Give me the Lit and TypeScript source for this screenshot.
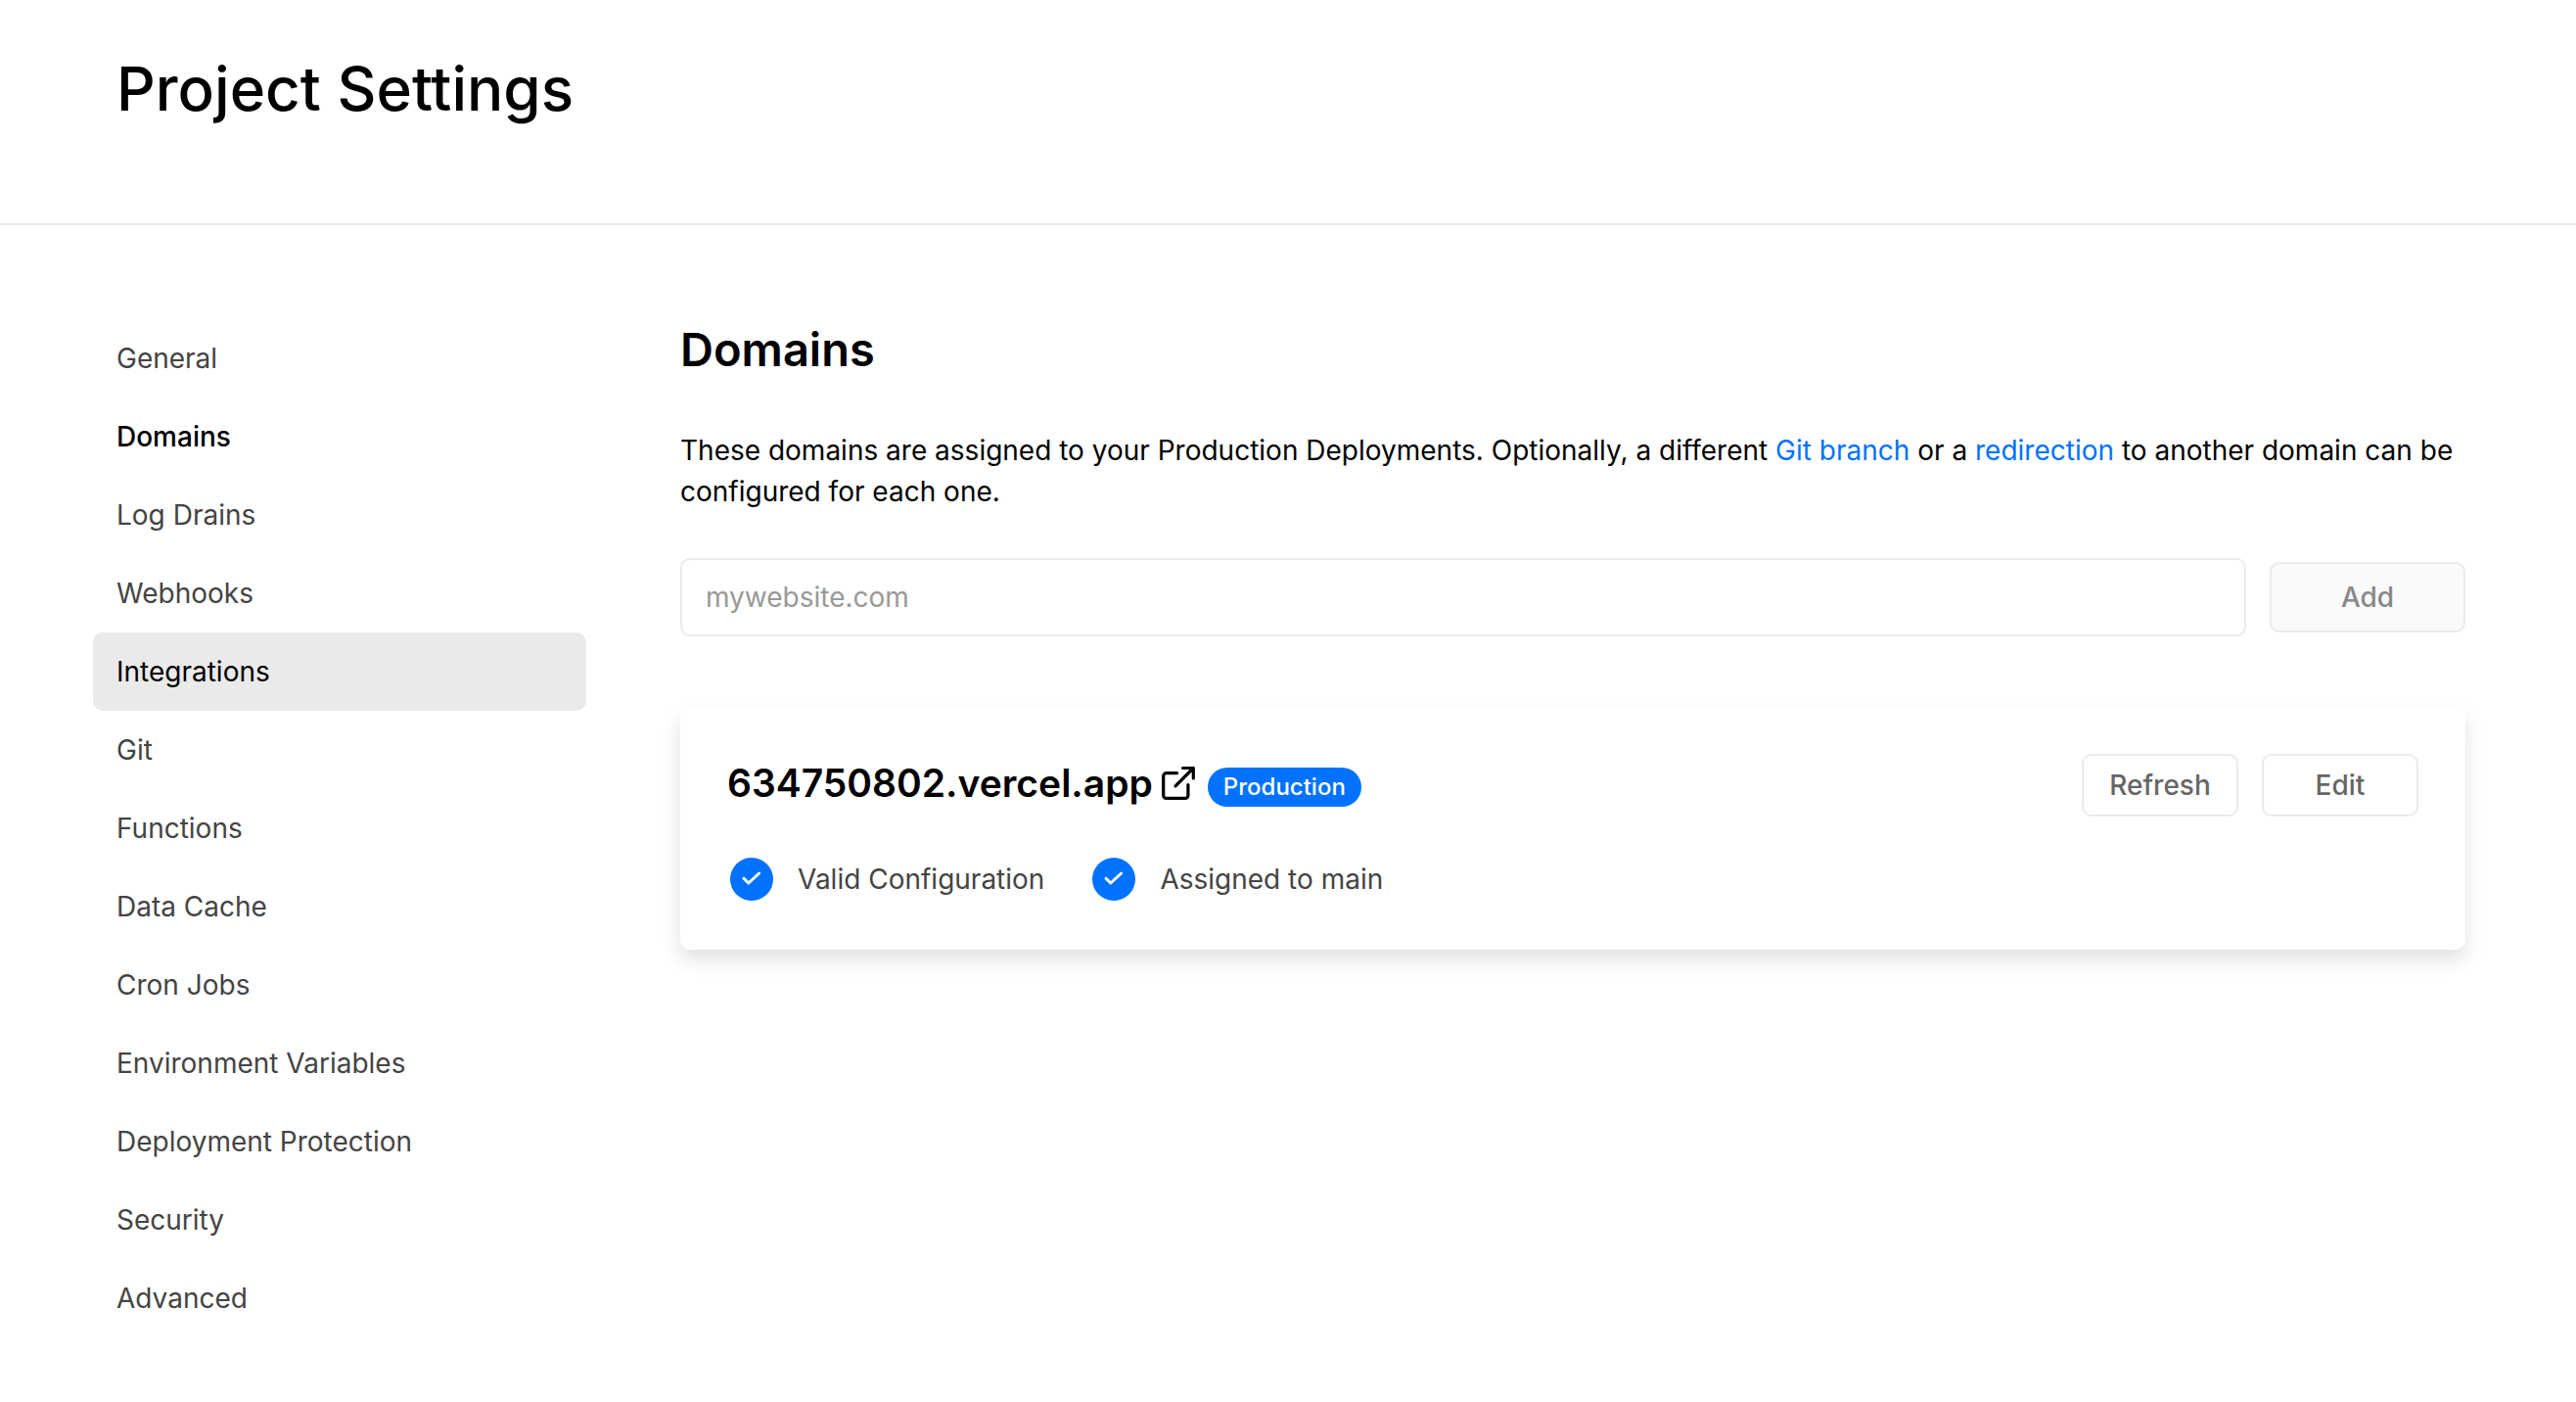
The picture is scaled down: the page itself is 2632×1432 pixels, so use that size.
import { LitElement, html, css } from "lit";
import { customElement, state } from "lit/decorators.js";
import { classMap } from "lit/directives/class-map.js";

const SECTIONS = [
  "General",
  "Domains",
  "Log Drains",
  "Webhooks",
  "Integrations",
  "Git",
  "Functions",
  "Data Cache",
  "Cron Jobs",
  "Environment Variables",
  "Deployment Protection",
  "Security",
  "Advanced",
];

const CHECKS = ["Valid Configuration", "Assigned to main"];

@customElement("settings-nav")
class SettingsNav extends LitElement {
  static styles = css`
    :host {
      display: block;
    }
    .list {
      display: flex;
      flex-direction: column;
      margin: 0;
      padding: 0;
      list-style: none;
    }
    .item {
      display: block;
      padding: 19px 24px;
      border-radius: 10px;
      color: #444;
      font-size: 28px;
      line-height: 42px;
      text-decoration: none;
    }
    .item.current {
      color: #000;
      font-weight: 500;
    }
    .item.hovered,
    .item:hover {
      background: #eaeaea;
      color: #000;
    }
  `;

  @state() private current = "Domains";
  @state() private hovered = "Integrations";

  render() {
    return html`
      <nav aria-label="Project settings">
        <ul class="list">
          ${SECTIONS.map(
            (name) => html`<li>
              <a
                href="#"
                class=${classMap({
                  item: true,
                  current: name === this.current,
                  hovered: name === this.hovered,
                })}
                aria-current=${name === this.current ? "page" : "false"}
                @mouseenter=${() => (this.hovered = name)}
                >${name}</a
              >
            </li>`
          )}
        </ul>
      </nav>
    `;
  }
}

@customElement("domain-card")
class DomainCard extends LitElement {
  static styles = css`
    :host {
      display: block;
    }
    .card {
      display: flex;
      flex-direction: column;
      gap: 40px;
      padding: 48px;
      border-radius: 10px;
      background: #fff;
      box-shadow: 0 10px 20px rgba(0, 0, 0, 0.12);
    }
    .top {
      display: flex;
      align-items: center;
      justify-content: space-between;
      height: 64px;
    }
    .title {
      display: flex;
      align-items: center;
    }
    .domain {
      display: flex;
      align-items: center;
      gap: 8px;
      padding-bottom: 4px;
      color: #000;
      font-size: 39px;
      line-height: 60px;
      font-weight: 600;
      text-decoration: none;
    }
    .external {
      width: 36px;
      height: 36px;
    }
    .badge {
      margin: 4px 0 0 12px;
      padding: 0 16px;
      border-radius: 20px;
      background: #0072ff;
      color: #fff;
      font-size: 24px;
      line-height: 40px;
      font-weight: 500;
    }
    .actions {
      display: flex;
      gap: 24px;
    }
    .button {
      width: 160px;
      height: 64px;
      border: 2px solid #eaeaea;
      border-radius: 10px;
      background: #fff;
      color: #666;
      font: 500 28px "Inter", sans-serif;
      padding: 0;
    }
    .checks {
      display: flex;
      gap: 46px;
      margin: 0;
      padding: 0;
      list-style: none;
    }
    .check {
      display: flex;
      align-items: center;
      gap: 24px;
      height: 48px;
      color: #444;
      font-size: 28px;
      line-height: 42px;
    }
    .tick {
      width: 48px;
      height: 48px;
    }
  `;

  render() {
    return html`
      <article class="card">
        <div class="top">
          <div class="title">
            <a class="domain" href="#"
              >634750802.vercel.app
              <svg
                class="external"
                viewBox="0 0 36 36"
                fill="none"
                stroke="currentColor"
                stroke-width="3.2"
                stroke-linecap="round"
                stroke-linejoin="round"
                aria-hidden="true"
              >
                <path
                  d="M16.5 7.7H5.7a3 3 0 0 0-3 3v19.7a3 3 0 0 0 3 3h19.2a3 3 0 0 0 3-3V19.5"
                />
                <path d="M22.5 2.5h10.8v10.5M33.3 2.5 15 20.8" />
              </svg>
            </a>
            <span class="badge">Production</span>
          </div>
          <div class="actions">
            <button class="button" type="button">Refresh</button>
            <button class="button" type="button">Edit</button>
          </div>
        </div>
        <ul class="checks">
          ${CHECKS.map(
            (label) => html`<li class="check">
              <svg class="tick" viewBox="0 0 48 48" fill="none" aria-hidden="true">
                <circle cx="25" cy="24" r="22" fill="#0072ff" />
                <path
                  d="m17 23.2 4.8 4.8 10.8-10"
                  stroke="#fff"
                  stroke-width="3"
                  stroke-linecap="round"
                  stroke-linejoin="round"
                />
              </svg>
              <span>${label}</span>
            </li>`
          )}
        </ul>
      </article>
    `;
  }
}

@customElement("app-root")
class AppRoot extends LitElement {
  static styles = css`
    :host {
      display: block;
      min-height: 100vh;
      background: #fff;
      color: #000;
      font-family: "Inter", sans-serif;
    }
    .header {
      padding: 43px 119px 89px;
      border-bottom: 2px solid #eaeaea;
    }
    .heading {
      margin: 0;
      font-size: 62px;
      line-height: 96px;
      font-weight: 500;
    }
    .body {
      display: grid;
      grid-template-columns: 504px minmax(0, 1fr);
      gap: 96px;
      padding: 96px 113px 66px 95px;
    }
    .content {
      display: flex;
      flex-direction: column;
    }
    .subheading {
      margin: 0;
      font-size: 47px;
      line-height: 62px;
      font-weight: 600;
    }
    .intro {
      margin: 51px 0 47px;
      font-size: 28px;
      line-height: 42px;
    }
    .link {
      color: #0072ff;
      text-decoration: none;
    }
    .form {
      display: flex;
      align-items: center;
      gap: 24px;
      margin-bottom: 72px;
    }
    .field {
      flex: 1;
      min-width: 0;
      height: 80px;
      box-sizing: border-box;
      padding: 0 24px;
      border: 2px solid #eaeaea;
      border-radius: 10px;
      background: #fff;
      color: #000;
      font: 28px "Inter", sans-serif;
    }
    .field::placeholder {
      color: #999;
    }
    .add {
      width: 200px;
      height: 72px;
      border: 2px solid #eaeaea;
      border-radius: 10px;
      background: #fafafa;
      color: #888;
      font: 500 28px "Inter", sans-serif;
    }
  `;

  render() {
    return html`
      <header class="header">
        <h1 class="heading">Project Settings</h1>
      </header>
      <div class="body">
        <settings-nav></settings-nav>
        <main class="content">
          <h2 class="subheading">Domains</h2>
          <p class="intro">
            These domains are assigned to your Production Deployments. Optionally, a different
            <a class="link" href="#">Git branch</a> or a
            <a class="link" href="#">redirection</a> to another domain can be configured for each
            one.
          </p>
          <form class="form" @submit=${(e: Event) => e.preventDefault()}>
            <input class="field" type="text" aria-label="Domain" placeholder="mywebsite.com" />
            <button class="add" type="submit" disabled>Add</button>
          </form>
          <domain-card></domain-card>
        </main>
      </div>
    `;
  }
}
